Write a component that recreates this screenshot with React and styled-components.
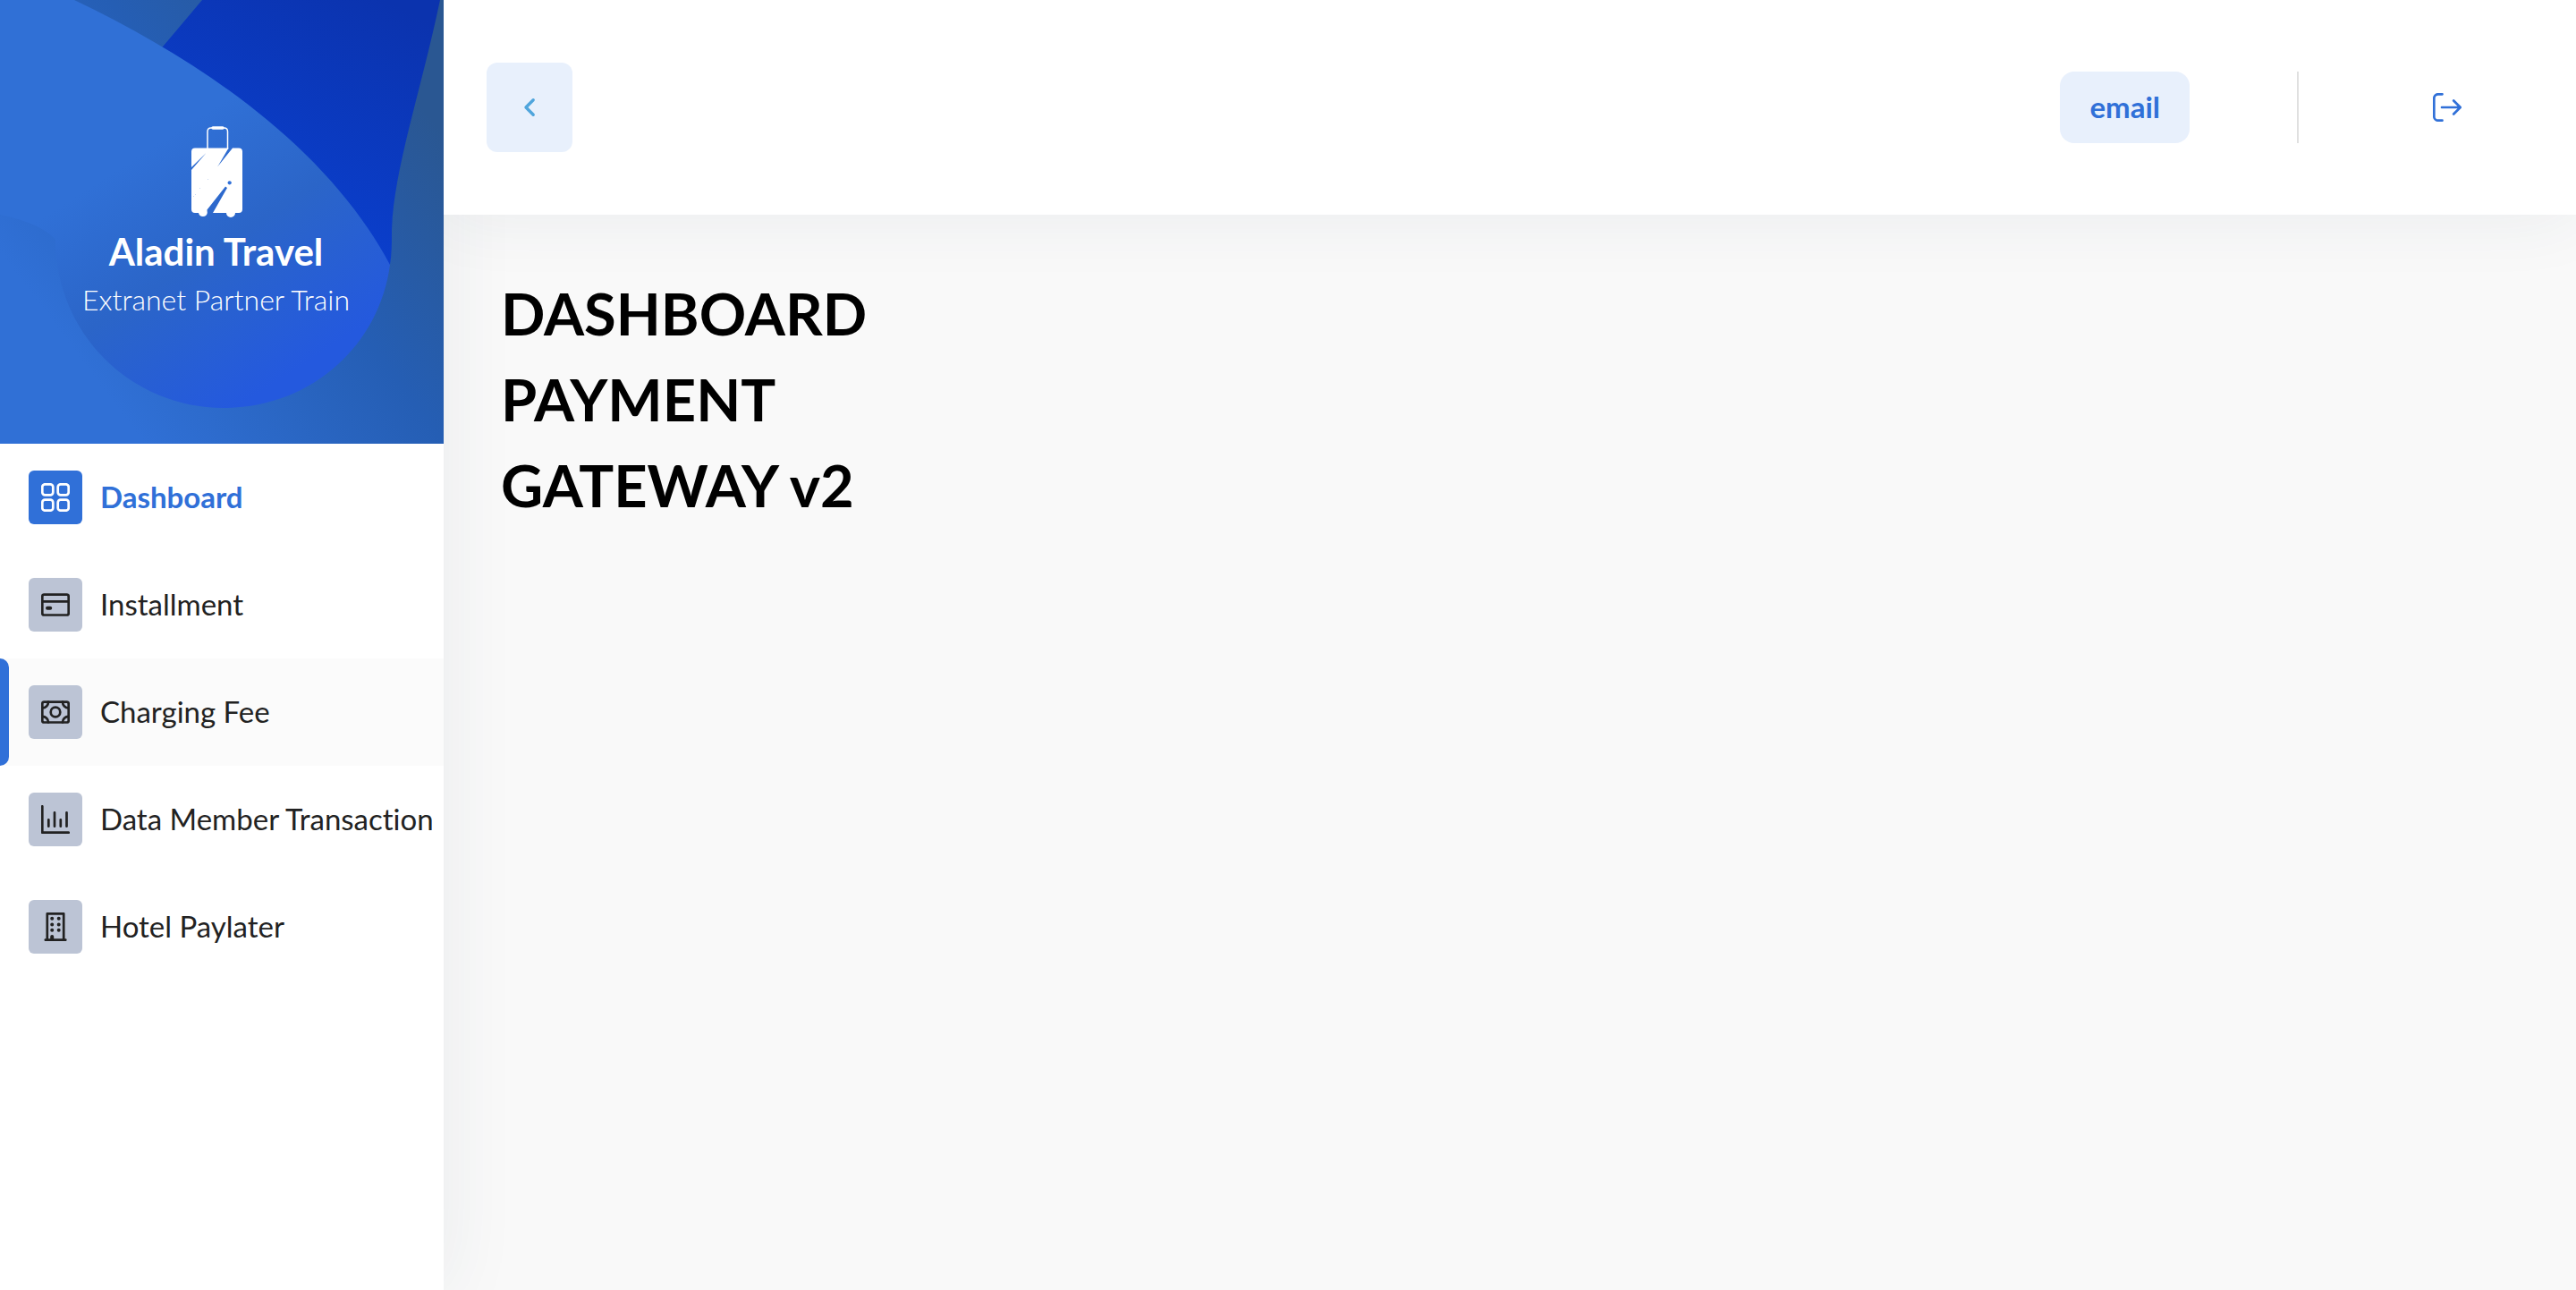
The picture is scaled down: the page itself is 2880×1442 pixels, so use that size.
import React from "react";
import styled, { createGlobalStyle, css } from "styled-components";

const GlobalStyle = createGlobalStyle`
  * { box-sizing: border-box; }
  body {
    margin: 0;
    background: #f9f9f9;
    color: #222222;
    font-family: Lato, "Open Sans", sans-serif;
    font-size: 33px;
    line-height: 48px;
    font-variant-ligatures: none;
  }
`;

const blue = "#3070d8";
const softShadow = css`box-shadow: 0 0 80px rgba(40, 60, 90, 0.08);`;

const Page = styled.div`
  display: flex;
  min-height: 100vh;
`;

const Sidebar = styled.aside`
  flex: 0 0 496px;
  background: #ffffff;
  ${softShadow}
`;

const Brand = styled.div`
  display: grid;
  color: #ffffff;
  > * { grid-area: 1 / 1; }
`;

const Backdrop = styled.svg`
  display: block;
  width: 100%;
`;

const BrandContent = styled.div`
  z-index: 1;
  display: flex;
  flex-direction: column;
  align-items: center;
  padding: 141px 13px 0 0;
`;

const Suitcase = styled.svg`
  width: 60px;
  height: 104px;
`;

const BrandName = styled.strong`
  margin-top: 10px;
  font-size: 42px;
  line-height: 52px;
  font-weight: 700;
`;

const BrandTagline = styled.span`
  margin-top: 4px;
  font-size: 32px;
  line-height: 48px;
  font-weight: 300;
`;

const Menu = styled.ul`
  margin: 0;
  padding: 0;
  list-style: none;
`;

const MenuLink = styled.a`
  position: relative;
  display: flex;
  align-items: center;
  gap: 20px;
  height: 120px;
  padding-left: 32px;
  color: ${(p) => (p.$active ? blue : "#222222")};
  font-weight: ${(p) => (p.$active ? 700 : 400)};
  text-decoration: none;
  white-space: nowrap;
  background: ${(p) => (p.$hovered ? "#fbfbfb" : "transparent")};

  &::before {
    content: "";
    display: ${(p) => (p.$hovered ? "block" : "none")};
    position: absolute;
    inset: 0 auto 0 0;
    width: 10px;
    border-radius: 0 10px 10px 0;
    background: ${blue};
  }
`;

const MenuLabel = styled.span`
  padding-bottom: 3px;
`;

const Tile = styled.span`
  display: grid;
  place-items: center;
  width: 60px;
  height: 60px;
  border-radius: 6px;
  color: ${(p) => (p.$active ? "#ffffff" : "#222222")};
  background: ${(p) => (p.$active ? blue : "#bcc4d5")};
`;

const Glyph = styled.svg.attrs({ viewBox: "0 0 32 32", "aria-hidden": true })`
  display: block;
  width: 32px;
  height: 32px;
  fill: none;
  stroke: currentColor;
  stroke-width: 2.7;
  stroke-linecap: round;
  stroke-linejoin: round;
`;

const Column = styled.div`
  flex: 1;
  min-width: 0;
  display: flex;
  flex-direction: column;
`;

const Header = styled.header`
  display: flex;
  align-items: center;
  height: 240px;
  padding: 0 128px 0 48px;
  background: #ffffff;
  z-index: 1;
  clip-path: inset(0 0 -100px 0);
  ${softShadow}
`;

const BaseButton = styled.button`
  border: 0;
  padding: 0;
  font: inherit;
  color: ${blue};
  background: none;
  cursor: pointer;
`;

const CollapseButton = styled(BaseButton)`
  display: grid;
  place-items: center;
  width: 96px;
  height: 100px;
  margin-right: auto;
  border-radius: 12px;
  color: #4fa5dc;
  background: #e8f0fc;
`;

const AccountButton = styled(BaseButton)`
  height: 80px;
  padding: 0 33px 3px;
  border-radius: 16px;
  font-weight: 700;
  background: #e8f0fc;
`;

const Divider = styled.span`
  width: 2px;
  height: 80px;
  margin: 0 150px 0 120px;
  background: #e0e0e0;
`;

const Content = styled.main`
  padding: 62px 64px;
`;

const Title = styled.h1`
  max-width: 560px;
  margin: 0;
  color: #000000;
  font-size: 65px;
  line-height: 96px;
  font-weight: 700;
`;

const icons = {
  dashboard: (
    <>
      <rect x="1.3" y="1.3" width="12" height="12" rx="3" />
      <rect x="18.7" y="1.3" width="12" height="12" rx="3" />
      <rect x="1.3" y="18.7" width="12" height="12" rx="3" />
      <rect x="18.7" y="18.7" width="12" height="12" rx="3" />
    </>
  ),
  card: (
    <>
      <rect x="1.3" y="4.7" width="29.4" height="22.8" rx="2" />
      <path d="M1.3 12.3H30.7" />
      <path d="M7 19.8H10.2" strokeWidth="4" />
    </>
  ),
  cash: (
    <>
      <rect x="1.3" y="4.7" width="29.4" height="22.8" rx="2" />
      <circle cx="16" cy="16" r="5.3" />
      <path d="M8 4.7A6.7 6.7 0 0 1 1.3 11.4M24 4.7A6.7 6.7 0 0 0 30.7 11.4M8 27.5A6.7 6.7 0 0 0 1.3 20.8M24 27.5A6.7 6.7 0 0 1 30.7 20.8" />
    </>
  ),
  chart: <path d="M1.3 1.3V30.7H30.7M8.3 16.3V23.7M15 8.3V23.7M21.8 16.3V23.7M28.5 8.3V23.7" />,
  building: (
    <>
      <path d="M6.8 30.7V1.3H25.2V30.7M4.8 30.7H27.3" />
      <path d="M12.2 6.8h.01M19.7 6.8h.01M12.2 13.4h.01M19.7 13.4h.01M12.2 19.7h.01M19.7 19.7h.01" strokeWidth="4" />
      <path d="M12.2 27V30" strokeWidth="4" />
    </>
  ),
  back: <path d="M20.2 7.8L12 16L20.2 24.2" strokeWidth="3.4" />,
  logout: <path d="M10.5 1.3H5.8A4.5 4.5 0 0 0 1.3 5.8V26.2A4.5 4.5 0 0 0 5.8 30.7H10.5M10 16H30.7M23.2 8.5L30.7 16L23.2 23.5" />,
};

const menu = [
  { label: "Dashboard", icon: "dashboard", active: true },
  { label: "Installment", icon: "card" },
  { label: "Charging Fee", icon: "cash", hovered: true },
  { label: "Data Member Transaction", icon: "chart" },
  { label: "Hotel Paylater", icon: "building" },
];

function BrandPanel() {
  return (
    <Brand>
      <Backdrop viewBox="0 0 496 496" aria-hidden="true">
        <defs>
          <linearGradient id="base" gradientUnits="userSpaceOnUse" x1="60" y1="480" x2="496" y2="150">
            <stop offset="0.13" stopColor="#3070d6" />
            <stop offset="0.62" stopColor="#255eb4" />
            <stop offset="1" stopColor="#2a5792" />
          </linearGradient>
          <linearGradient id="wave" gradientUnits="userSpaceOnUse" x1="470" y1="20" x2="330" y2="290">
            <stop offset="0" stopColor="#0b33ae" />
            <stop offset="1" stopColor="#0a40d0" />
          </linearGradient>
          <linearGradient id="drop" gradientUnits="userSpaceOnUse" x1="130" y1="190" x2="290" y2="440">
            <stop offset="0" stopColor="#3070d6" />
            <stop offset="0.45" stopColor="#2b65c8" />
            <stop offset="1" stopColor="#2459de" />
          </linearGradient>
        </defs>
        <rect width="496" height="496" fill="url(#base)" />
        <path d="M226 0L150 90L300 240L436 296C438 284 438 272 438 258C440 190 470 105 492 0Z" fill="url(#wave)" />
        <path
          d="M83 0C230 70 368 168 436 296C424 386 348 456 250 456C146 456 62 372 62 268C52 256 30 246 0 240V0Z"
          fill="url(#drop)"
        />
      </Backdrop>
      <BrandContent>
        <Suitcase viewBox="212 141 60 104" aria-hidden="true">
          <path d="M232 167V147Q232 143 236 143H250.500Q254.500 143 254.500 147V167" fill="none" stroke="#fff" strokeWidth="1.500" />
          <path d="M238 143H249" stroke="#fff" strokeWidth="3.400" strokeLinecap="round" />
          <path
            fill="#fff"
            d="M218 165.500H255.500L243.500 186L260 165.500H267Q271 165.500 271 169.500V234Q271 238 267 238H263A5 5 0 0 1 253 238H238L254 210L252 208.500L231.500 234.500L231.800 238A5 5 0 0 1 222 238H218Q214 238 214 234V190L230.500 171L214 187V169.500Q214 165.500 218 165.500Z"
          />
          <circle cx="256.700" cy="204.300" r="2.100" fill={blue} />
          <g fill="#b9cdf0">
            <circle cx="232.500" cy="200.500" r="0.500" />
            <circle cx="223.500" cy="210.500" r="0.500" />
            <circle cx="218.500" cy="217.500" r="0.500" />
            <circle cx="216.500" cy="219.500" r="0.500" />
          </g>
        </Suitcase>
        <BrandName>Aladin Travel</BrandName>
        <BrandTagline>Extranet Partner Train</BrandTagline>
      </BrandContent>
    </Brand>
  );
}

export default function App() {
  return (
    <Page>
      <GlobalStyle />
      <Sidebar>
        <BrandPanel />
        <nav>
          <Menu>
            {menu.map((item) => (
              <li key={item.label}>
                <MenuLink href="#" $active={item.active} $hovered={item.hovered}>
                  <Tile $active={item.active}>
                    <Glyph>{icons[item.icon]}</Glyph>
                  </Tile>
                  <MenuLabel>{item.label}</MenuLabel>
                </MenuLink>
              </li>
            ))}
          </Menu>
        </nav>
      </Sidebar>
      <Column>
        <Header>
          <CollapseButton type="button" aria-label="Collapse sidebar">
            <Glyph>{icons.back}</Glyph>
          </CollapseButton>
          <AccountButton type="button">email</AccountButton>
          <Divider />
          <BaseButton type="button" aria-label="Log out">
            <Glyph>{icons.logout}</Glyph>
          </BaseButton>
        </Header>
        <Content>
          <Title>DASHBOARD PAYMENT GATEWAY v2</Title>
        </Content>
      </Column>
    </Page>
  );
}
